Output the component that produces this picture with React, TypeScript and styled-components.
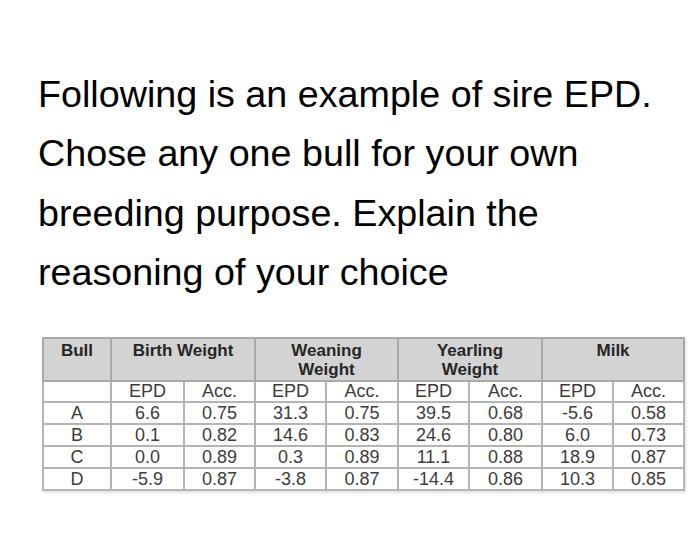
import React from 'react';
import styled, { createGlobalStyle } from 'styled-components';

const GlobalStyle = createGlobalStyle`
  html, body {
    margin: 0;
    padding: 0;
    background: #ffffff;
  }
`;

const Page = styled.div`
  width: 700px;
  height: 535px;
  padding: 65px 0 0 38px;
  box-sizing: border-box;
  font-family: "Liberation Sans", Arial, sans-serif;
  overflow: hidden;
`;

const Question = styled.p`
  margin: 0;
  font-size: 37.7px;
  line-height: 59.3px;
  color: #000;
`;

const Line = styled.span`
  display: block;
  white-space: nowrap;
`;

const EpdTable = styled.table`
  margin: 35px 0 0 4px;
  border-collapse: collapse;
  table-layout: fixed;
  width: 641px;
  color: #3c3c3c;
  box-shadow: 1px 2px 3px rgba(0, 0, 0, 0.12);
`;

const HeadCell = styled.th`
  background: #d3d3d3;
  border: 2px solid #a9a9a9;
  color: #262626;
  font-size: 17px;
  font-weight: bold;
  line-height: 19px;
  height: 39px;
  padding: 2px 2px 0;
  vertical-align: top;
  text-align: center;
`;

const Cell = styled.td<{ $sub?: boolean }>`
  border: 2px solid #b4b4b4;
  font-size: 18px;
  line-height: 19px;
  height: ${p => (p.$sub ? '19px' : '20px')};
  padding: 0;
  text-align: center;
  background: #fff;
`;

const groups = ['Birth Weight', 'Weaning\nWeight', 'Yearling\nWeight', 'Milk'];
const widths = [68, 73, 71, 71, 72, 71, 73, 71, 71];

const rows = [
  ['A', '6.6', '0.75', '31.3', '0.75', '39.5', '0.68', '-5.6', '0.58'],
  ['B', '0.1', '0.82', '14.6', '0.83', '24.6', '0.80', '6.0', '0.73'],
  ['C', '0.0', '0.89', '0.3', '0.89', '11.1', '0.88', '18.9', '0.87'],
  ['D', '-5.9', '0.87', '-3.8', '0.87', '-14.4', '0.86', '10.3', '0.85'],
];

export default function App() {
  return (
    <Page>
      <GlobalStyle />
      <Question>
        <Line>Following is an example of sire EPD.</Line>
        <Line>Chose any one bull for your own</Line>
        <Line>breeding purpose. Explain the</Line>
        <Line>reasoning of your choice</Line>
      </Question>
      <EpdTable>
        <colgroup>
          {widths.map((w, i) => (
            <col key={i} style={{ width: w }} />
          ))}
        </colgroup>
        <thead>
          <tr>
            <HeadCell>Bull</HeadCell>
            {groups.map(g => (
              <HeadCell key={g} colSpan={2}>
                {g.split('\n').map((part, i) => (
                  <React.Fragment key={i}>
                    {i > 0 && <br />}
                    {part}
                  </React.Fragment>
                ))}
              </HeadCell>
            ))}
          </tr>
        </thead>
        <tbody>
          <tr>
            <Cell $sub />
            {groups.map(g => (
              <React.Fragment key={g}>
                <Cell $sub>EPD</Cell>
                <Cell $sub>Acc.</Cell>
              </React.Fragment>
            ))}
          </tr>
          {rows.map(r => (
            <tr key={r[0]}>
              {r.map((v, i) => (
                <Cell key={i}>{v}</Cell>
              ))}
            </tr>
          ))}
        </tbody>
      </EpdTable>
    </Page>
  );
}
